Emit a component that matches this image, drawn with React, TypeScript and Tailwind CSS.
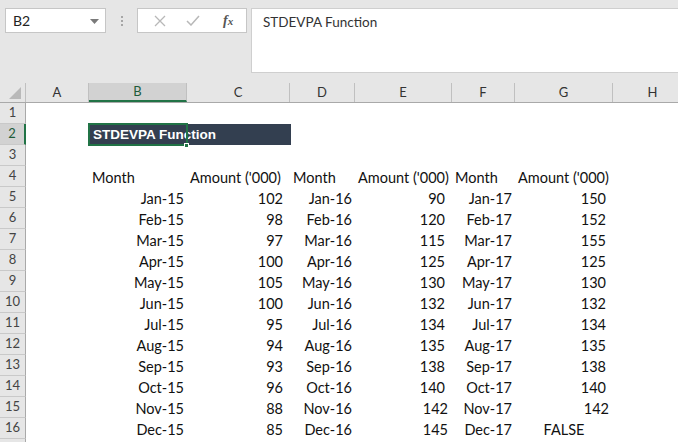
import React from "react";

const COLS = [
  { key: "A", w: "w-[63px]" },
  { key: "B", w: "w-[98px]" },
  { key: "C", w: "w-[103px]" },
  { key: "D", w: "w-[65px]" },
  { key: "E", w: "w-[97px]" },
  { key: "F", w: "w-[63px]" },
  { key: "G", w: "w-[98px]" },
  { key: "H", w: "w-[80px]" },
];

const MONTHS = ["Jan", "Feb", "Mar", "Apr", "May", "Jun", "Jul", "Aug", "Sep", "Oct", "Nov", "Dec"];
const AMT15 = [102, 98, 97, 100, 105, 100, 95, 94, 93, 96, 88, 85];
const AMT16 = [90, 120, 115, 125, 130, 132, 134, 135, 138, 140, 142, 145];
const AMT17: (number | string)[] = [150, 152, 155, 125, 130, 132, 134, 135, 138, 140, 142, "FALSE"];

const cellFont = "font-['Lato',sans-serif] text-[14.5px] text-[#111]";

function RowHead({ n, active }: { n?: number; active?: boolean }) {
  return (
    <div
      className={`flex h-[21px] w-[26px] shrink-0 items-center justify-center border-b border-[#c9c9c9] font-['Lato',sans-serif] text-[13px] ${
        active ? "border-r-2 border-r-[#217346] bg-[#d2d2d2] text-[#1e5c3a]" : "border-r border-r-[#a9a9a9] bg-[#e6e6e6] text-[#444]"
      }`}
    >
      {n}
    </div>
  );
}

function Cell({ w, children, align = "left", pr = "pr-[3px]" }: { w: string; children?: React.ReactNode; align?: "left" | "right" | "center"; pr?: string }) {
  const a = align === "right" ? `text-right ${pr}` : align === "center" ? "text-center" : "pl-[3px]";
  return <div className={`h-[21px] shrink-0 whitespace-nowrap leading-[23px] ${w} ${a} ${cellFont}`}>{children}</div>;
}

export default function App() {
  return (
    <div className="h-[442px] w-[678px] overflow-hidden bg-white">
      {/* formula bar */}
      <div className="flex h-[83px] items-start bg-[#e6e6e6] pl-[5px] pt-[8px]">
        <div className="relative flex h-[25px] w-[101px] items-center border border-[#c6c6c6] bg-white pl-[7px] font-['Lato',sans-serif] text-[14px] text-[#222]">
          B2
          <svg className="absolute right-[6px] top-[10px]" width="9" height="5" viewBox="0 0 9 5">
            <path d="M0 0h9L4.5 5z" fill="#7a7a7a" />
          </svg>
        </div>
        <div className="flex h-[25px] w-[31px] flex-col items-center justify-center gap-[2px]">
          <span className="h-[2px] w-[2px] bg-[#a6a6a6]" />
          <span className="h-[2px] w-[2px] bg-[#a6a6a6]" />
          <span className="h-[2px] w-[2px] bg-[#a6a6a6]" />
        </div>
        <div className="flex h-[25px] w-[110px] items-center border border-[#c6c6c6] bg-white">
          <svg className="ml-[16px]" width="12" height="12" viewBox="0 0 12 12">
            <path d="M1 1l10 10M11 1L1 11" stroke="#b8b8b8" strokeWidth="1.3" />
          </svg>
          <svg className="ml-[20px]" width="14" height="11" viewBox="0 0 14 11">
            <path d="M1 6l4 4 8-9" stroke="#b8b8b8" strokeWidth="1.5" fill="none" />
          </svg>
          <span className="ml-[23px] font-['Liberation_Serif',serif] text-[14px] font-bold italic text-[#555]">
            f<span className="text-[11px]">x</span>
          </span>
        </div>
        <div className="ml-[4px] h-[65px] flex-1 border-y border-l border-[#cfcfcf] bg-white pl-[11px] pt-[3px] font-['Lato',sans-serif] text-[13.5px] text-[#333]">
          STDEVPA Function
        </div>
      </div>

      {/* column header */}
      <div className="flex h-[20px] border-b border-[#a9a9a9] bg-[#e6e6e6]">
        <div className="relative w-[26px] shrink-0 border-r border-[#c0c0c0]">
          <svg className="absolute bottom-[3px] right-[4px]" width="12" height="12" viewBox="0 0 12 12">
            <path d="M12 0v12H0z" fill="#b9b9b9" />
          </svg>
        </div>
        {COLS.map((c) => (
          <div
            key={c.key}
            className={`flex shrink-0 items-center justify-center font-['Lato',sans-serif] text-[13px] ${c.w} ${
              c.key === "B" ? "border-b-2 border-b-[#217346] border-r border-r-[#c0c0c0] bg-[#d2d2d2] text-[#1e5c3a]" : "border-r border-[#c0c0c0] text-[#333]"
            }`}
          >
            {c.key}
          </div>
        ))}
      </div>

      {/* rows */}
      <div className="flex">
        <RowHead n={1} />
      </div>
      <div className="relative flex">
        <RowHead n={2} active />
        <Cell w="w-[63px]" />
        <div className="h-[21px] w-[202px] shrink-0 whitespace-nowrap bg-[#333f50] pl-[4px] font-['Liberation_Sans',sans-serif] text-[13.5px] font-bold leading-[22px] text-white">
          STDEVPA Function
        </div>
        {/* selection */}
        <div className="pointer-events-none absolute left-[88px] top-[-1px] h-[23px] w-[100px] border-2 border-[#217346]" />
        <div className="absolute left-[184px] top-[19px] h-[5px] w-[5px] border border-white bg-[#217346]" />
      </div>
      <div className="flex">
        <RowHead n={3} />
      </div>
      <div className="flex">
        <RowHead n={4} />
        <Cell w="w-[63px]" />
        <Cell w="w-[98px]">Month</Cell>
        <Cell w="w-[103px]">Amount ('000)</Cell>
        <Cell w="w-[65px]">Month</Cell>
        <Cell w="w-[97px]">Amount ('000)</Cell>
        <Cell w="w-[63px]">Month</Cell>
        <Cell w="w-[98px]">Amount ('000)</Cell>
      </div>
      {MONTHS.map((m, i) => (
        <div key={m} className="flex">
          <RowHead n={i + 5} />
          <Cell w="w-[63px]" />
          <Cell w="w-[98px]" align="right">{m}-15</Cell>
          <Cell w="w-[103px]" align="right" pr="pr-[7px]">{AMT15[i]}</Cell>
          <Cell w="w-[65px]" align="right">{m}-16</Cell>
          <Cell w="w-[97px]" align="right" pr={i >= 10 ? "pr-[4px]" : "pr-[7px]"}>{AMT16[i]}</Cell>
          <Cell w="w-[63px]" align="right">{m}-17</Cell>
          {AMT17[i] === "FALSE" ? (
            <Cell w="w-[98px]" align="center">FALSE</Cell>
          ) : (
            <Cell w="w-[98px]" align="right" pr={i === 10 ? "pr-[4px]" : "pr-[7px]"}>{AMT17[i]}</Cell>
          )}
        </div>
      ))}
      <div className="flex">
        <RowHead />
      </div>
    </div>
  );
}
